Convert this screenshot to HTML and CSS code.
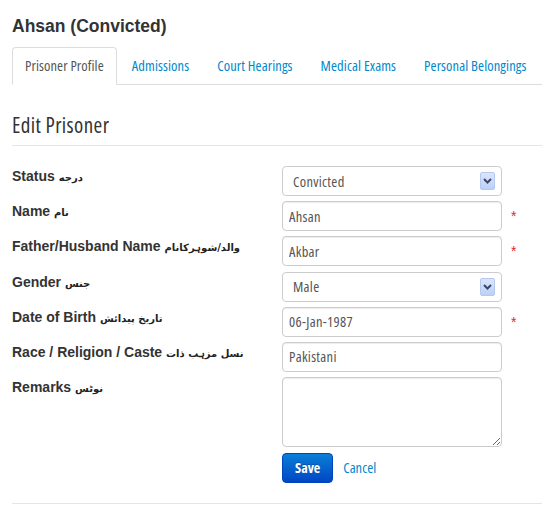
FILE: index.html
```html
<!DOCTYPE html>
<html>
<head>
<meta charset="utf-8">
<title>Edit Prisoner</title>
<link rel="stylesheet" href="styles.css">
</head>
<body>
<div class="page">
  <h4 class="title">Ahsan (Convicted)</h4>
  <ul class="tabs">
    <li><a class="tab active">Prisoner Profile</a></li>
    <li><a class="tab">Admissions</a></li>
    <li><a class="tab">Court Hearings</a></li>
    <li><a class="tab">Medical Exams</a></li>
    <li><a class="tab">Personal Belongings</a></li>
  </ul>
  <form class="form">
    <div class="legend">Edit Prisoner</div>
    <div class="grid">
      <label class="label">Status <span class="ur">درجه</span></label>
      <div class="control">
        <span class="select-wrap">
          <select class="select"><option>Convicted</option></select>
          <span class="arrow"><svg width="9" height="6" viewBox="0 0 9 6"><path d="M1 1 L4.5 4.5 L8 1" fill="none" stroke="#3b4868" stroke-width="2"/></svg></span>
        </span>
      </div>

      <label class="label">Name <span class="ur">نام</span></label>
      <div class="control"><input class="input" type="text" value="Ahsan"><span class="req">*</span></div>

      <label class="label">Father/Husband Name <span class="ur">والد/شوہرکانام</span></label>
      <div class="control"><input class="input" type="text" value="Akbar"><span class="req">*</span></div>

      <label class="label">Gender <span class="ur">جنس</span></label>
      <div class="control">
        <span class="select-wrap">
          <select class="select"><option>Male</option></select>
          <span class="arrow"><svg width="9" height="6" viewBox="0 0 9 6"><path d="M1 1 L4.5 4.5 L8 1" fill="none" stroke="#3b4868" stroke-width="2"/></svg></span>
        </span>
      </div>

      <label class="label">Date of Birth <span class="ur">تاریخ پیدائش</span></label>
      <div class="control"><input class="input" type="text" value="06-Jan-1987"><span class="req">*</span></div>

      <label class="label">Race / Religion / Caste <span class="ur">نسل مزہب ذات</span></label>
      <div class="control"><input class="input" type="text" value="Pakistani"></div>

      <label class="label">Remarks <span class="ur">نوٹس</span></label>
      <div class="control"><textarea class="textarea"></textarea></div>

      <div></div>
      <div class="actions">
        <button type="button" class="btn">Save</button>
        <a class="cancel">Cancel</a>
      </div>
    </div>
    <div class="rule"></div>
  </form>
</div>
</body>
</html>
```
FILE: styles.css
```css
* { box-sizing: border-box; }
html, body { margin: 0; padding: 0; background: #fff; }
body {
  font-family: "Open Sans", "Liberation Sans", Arial, sans-serif;
  font-stretch: 75%;
  font-size: 14.5px;
  line-height: 20px;
  color: #333;
}
.page { padding: 0 0 0 12px; }
.title {
  margin: 16px 0 0;
  font-family: "Liberation Sans", Arial, sans-serif;
  font-stretch: normal;
  font-size: 17.5px;
  font-weight: bold;
  line-height: 20px;
  color: #333;
}
.tabs {
  list-style: none;
  margin: 11px 0 0;
  padding: 0;
  display: flex;
  border-bottom: 1px solid #ddd;
  white-space: nowrap;
}
.tabs li { margin-bottom: -1px; }
.tab {
  display: block;
  padding: 8px 12px;
  margin-right: 2px;
  line-height: 20px;
  letter-spacing: 0.1px;
  border: 1px solid transparent;
  border-radius: 4px 4px 0 0;
  color: #0088cc;
  text-decoration: none;
}
.tab.active {
  color: #555;
  background: #fff;
  border-color: #ddd #ddd transparent;
}
.form { margin: 0; }
.legend {
  margin-top: 20px;
  height: 41px;
  font-weight: 400;
  font-size: 21px;
  letter-spacing: 0.4px;
  line-height: 40px;
  color: #333;
  border-bottom: 1px solid #e5e5e5;
}
.grid {
  margin-top: 20px;
  display: grid;
  grid-template-columns: 270px 1fr;
  row-gap: 5.2px;
}
.label {
  font-family: "Liberation Sans", Arial, sans-serif;
  font-stretch: normal;
  font-weight: bold;
  font-size: 14px;
  line-height: 20px;
  color: #333;
}
.ur {
  font-family: "DejaVu Sans", sans-serif;
  font-weight: bold;
  font-size: 10px;
  color: #222;
}
.control {
  display: flex;
  align-items: flex-start;
}
.input, .select, .textarea {
  width: 220px;
  height: 30px;
  font-family: "Open Sans", "Liberation Sans", Arial, sans-serif;
  font-stretch: 75%;
  font-size: 14.5px;
  letter-spacing: 0.3px;
  color: #555;
  background: #fff;
  border: 1px solid #ccc;
  border-radius: 4px;
  box-shadow: inset 0 1px 1px rgba(0,0,0,0.075);
  margin: 0;
  outline: none;
}
.input { padding: 4px 6px; line-height: 20px; }
.textarea { height: 70px; padding: 4px 6px; resize: both; display: block; }
.select-wrap { position: relative; display: block; width: 220px; height: 30px; }
.select {
  -webkit-appearance: none;
  appearance: none;
  padding: 0 0 0 10px;
  display: block;
  box-shadow: none;
}
.arrow {
  position: absolute;
  right: 7px;
  top: 6px;
  width: 15px;
  height: 18px;
  border: 1px solid #b4c8f0;
  border-radius: 2px;
  background: linear-gradient(#dbe6fb, #bcd0f6);
  display: flex;
  align-items: center;
  justify-content: center;
  pointer-events: none;
}
.req {
  color: #e8222b;
  margin-left: 9px;
  line-height: 30px;
  font-family: "Liberation Sans", Arial, sans-serif;
  font-stretch: normal;
  font-size: 14px;
}
.actions {
  display: flex;
  align-items: center;
  margin-top: 1px;
}
.btn {
  height: 30px;
  padding: 4px 12px;
  font-family: "Open Sans", "Liberation Sans", Arial, sans-serif;
  font-stretch: 75%;
  font-size: 14px;
  font-weight: bold;
  line-height: 20px;
  color: #fff;
  text-shadow: 0 -1px 0 rgba(0,0,0,0.25);
  background: linear-gradient(#0a7fd8, #0046c4);
  border: 1px solid #0044bb;
  border-radius: 4px;
}
.cancel {
  margin-left: 10px;
  color: #0088cc;
  font-size: 14.5px;
}
.rule {
  margin-top: 20px;
  border-top: 1px solid #e5e5e5;
}
```
